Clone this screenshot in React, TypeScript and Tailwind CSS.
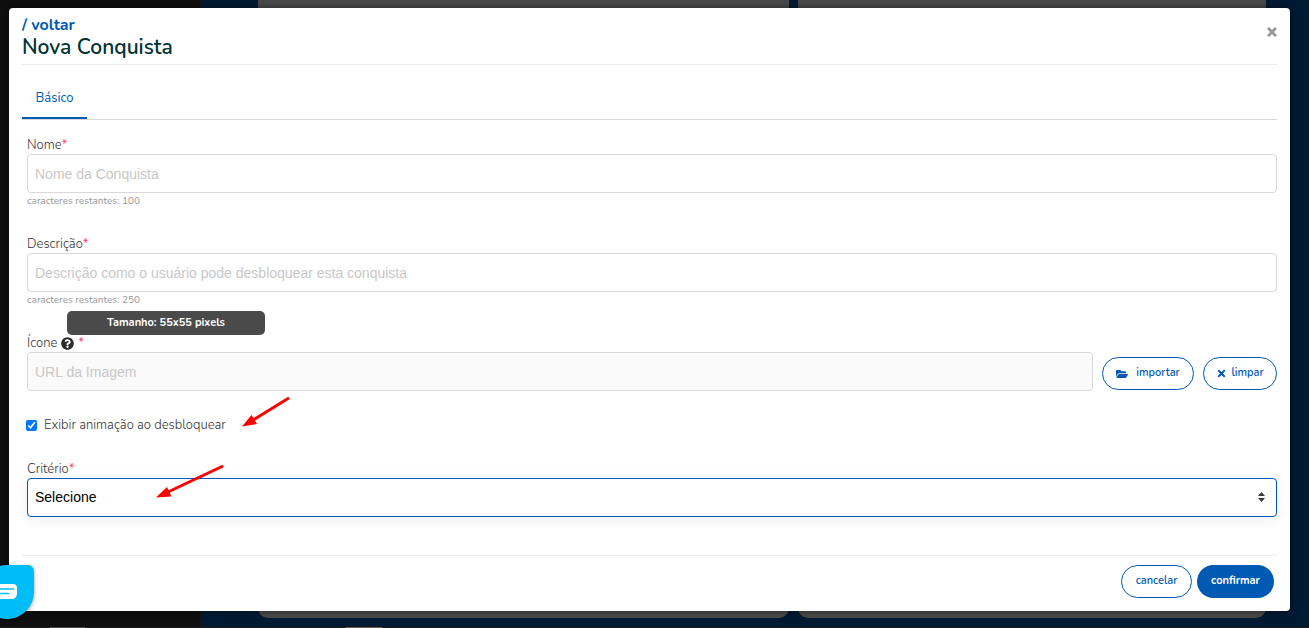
import React, { useState } from 'react';
import { FaFolderOpen, FaQuestionCircle, FaTimes } from 'react-icons/fa';

type TextFieldProps = {
  id: string;
  label: string;
  placeholder: string;
  max: number;
};

const inputClass =
  "block h-[39px] w-full rounded border border-[#d9d9d9] px-[7px] font-['Liberation_Sans',Arial,sans-serif] text-[14px] text-black placeholder:text-[#c8c8c8] outline-none";
const labelClass = "flex h-[18px] items-center text-[13px] leading-[18px] font-light text-[#333]";
const outlineButton =
  "flex h-[33px] items-center justify-center rounded-full border border-[#0059b3] bg-white text-[11px] font-semibold text-[#0059b3]";

function Required() {
  return <span className="text-[#ff1a4b]">*</span>;
}

function TextField({ id, label, placeholder, max }: TextFieldProps) {
  const [value, setValue] = useState('');

  return (
    <div>
      <label htmlFor={id} className={labelClass}>
        {label}
        <Required />
      </label>
      <input
        id={id}
        type="text"
        maxLength={max}
        value={value}
        placeholder={placeholder}
        onChange={(e) => setValue(e.target.value)}
        className={inputClass}
      />
      <p className="h-4 text-[10px] leading-4 text-[#999]">caracteres restantes: {max - value.length}</p>
    </div>
  );
}

// Dimmed page behind the dialog
function Backdrop() {
  return (
    <div className="absolute inset-0 flex flex-col bg-[#001a33]">
      <div className="flex min-h-0 flex-1">
        <div className="w-[201px] border-r border-[#151515] bg-[#0f0f0f]" />
        <div className="mr-[43px] mb-[9px] ml-[57px] flex flex-1 gap-[9px]">
          <div className="flex-[531] rounded-b-[10px] bg-[#4a4a4a]" />
          <div className="flex-[468] rounded-b-[10px] bg-[#4a4a4a]" />
        </div>
      </div>
      <div className="flex h-px bg-[#1c1c1c]">
        <div className="ml-[50px] w-[35px] bg-[#4a4a4a]" />
        <div className="ml-[261px] w-[36px] bg-[#7d5a3f]" />
      </div>
    </div>
  );
}

export default function App() {
  const [animate, setAnimate] = useState(true);

  return (
    <div className="relative min-h-screen overflow-hidden font-['Nunito','Lato',sans-serif]">
      <Backdrop />

      <main className="relative mt-2 mr-[19px] mb-[17px] ml-[9px] rounded bg-white px-[13px] pb-[13px] shadow-[0_0_8px_rgba(0,0,0,0.5)]">
        <header className="flex justify-between border-b border-[#ebebeb] pt-1.5 pb-1.5">
          <div>
            <a href="#voltar" className="block text-[16px] leading-[22px] font-bold text-[#0059b3]">
              / voltar
            </a>
            <h1 className="text-[21px] leading-[22px] font-semibold text-[#003333]">Nova Conquista</h1>
          </div>
          <button type="button" aria-label="Fechar" className="h-9 text-[#999]">
            <svg viewBox="0 0 10 10" className="size-[10px]" stroke="currentColor" strokeWidth="3">
              <path d="M1 1L9 9M9 1L1 9" />
            </svg>
          </button>
        </header>

        <nav className="mt-3 flex border-b border-[#d9d9d9]">
          <button
            type="button"
            className="h-[42px] w-[65px] border-b-2 border-[#0059b3] pt-1 text-[13px] text-[#0059b3]"
          >
            Básico
          </button>
        </nav>

        <form className="pt-4" onSubmit={(e) => e.preventDefault()}>
          <div className="flex flex-col gap-[26px] pl-[5px]">
            <TextField id="nome" label="Nome" placeholder="Nome da Conquista" max={100} />
            <TextField
              id="descricao"
              label="Descrição"
              placeholder="Descrição como o usuário pode desbloquear esta conquista"
              max={250}
            />

            <div className="flex gap-[9px]">
              <div className="flex-1">
                <div className="relative">
                  <label htmlFor="icone" className={labelClass}>
                    Ícone
                    <FaQuestionCircle className="mr-1 ml-1 size-[13px] text-[#2b2b2b]" />
                    <Required />
                  </label>
                  <div
                    role="tooltip"
                    className="absolute bottom-[17px] left-10 h-6 w-[198px] rounded-[5px] bg-[#4a4a4a] text-center text-[11px] leading-[23px] font-bold text-white"
                  >
                    Tamanho: 55x55 pixels
                  </div>
                </div>
                <input
                  id="icone"
                  type="text"
                  readOnly
                  placeholder="URL da Imagem"
                  className={`${inputClass} bg-[#fafafa]`}
                />
              </div>
              <button type="button" className={`${outlineButton} mt-[23px] w-[92px] gap-2`}>
                <FaFolderOpen className="size-3" />
                importar
              </button>
              <button type="button" className={`${outlineButton} mt-[23px] w-[74px] gap-1`}>
                <FaTimes className="size-[11px]" />
                limpar
              </button>
            </div>

            <label className="-ml-px flex h-[17px] items-center gap-[7px] text-[13px] font-light text-[#333]">
              <input
                type="checkbox"
                checked={animate}
                onChange={(e) => setAnimate(e.target.checked)}
                className="size-[11px] accent-[#0075ff]"
              />
              Exibir animação ao desbloquear
            </label>

            <div>
              <label htmlFor="criterio" className={labelClass}>
                Critério
                <Required />
              </label>
              <div className="relative">
                <select
                  id="criterio"
                  className="block h-[39px] w-full appearance-none rounded border border-[#0059b3] bg-white px-[7px] font-['Liberation_Sans',Arial,sans-serif] text-[14px] text-black shadow-[0_2px_14px_rgba(0,0,0,0.08)] outline-none"
                >
                  <option>Selecione</option>
                </select>
                <svg viewBox="0 0 7 10" className="pointer-events-none absolute top-[14px] right-3 h-[10px] w-[7px]" fill="#343a40">
                  <path d="M3.5 0L7 4H0ZM3.5 10L0 6H7Z" />
                </svg>
              </div>
            </div>
          </div>

          <footer className="mt-[38px] flex justify-end gap-[5px] border-t border-[#ebebeb] pt-[9px] pr-[3px]">
            <button type="button" className={`${outlineButton} w-[71px]`}>
              cancelar
            </button>
            <button
              type="submit"
              className="h-[33px] w-[77px] rounded-full bg-[#0059b3] text-[11px] font-bold text-white"
            >
              confirmar
            </button>
          </footer>
        </form>
      </main>

      {/* Chat launcher, partly off the left edge */}
      <button
        type="button"
        aria-label="Chat"
        className="absolute bottom-[9px] -left-5 flex size-[54px] items-center justify-center rounded-[27px] rounded-tr-[6px] bg-[#00bdf7] shadow-[0_2px_4px_rgba(0,0,0,0.35)]"
      >
        <svg viewBox="0 0 22 16" className="h-4 w-[22px]">
          <path d="M4 0H17Q21 0 21 4V9Q21 15 15 15H4Q0 15 0 11V4Q0 0 4 0Z" fill="#fff" />
          <path d="M3 5H18M3 9.5H13" stroke="#00bdf7" strokeWidth="1.5" />
        </svg>
      </button>

      {/* Annotation arrows */}
      <svg
        className="pointer-events-none absolute top-[396px] left-[155px] h-[104px] w-[136px]"
        viewBox="155 396 136 104"
        fill="#f00"
        stroke="#f00"
      >
        <path d="M288 398.500L253 420M222 466.500L169 491.500" strokeWidth="3" strokeLinecap="round" />
        <path d="M242 426.500L251.500 415L257 424ZM156 497.500L167 487L171.500 496.500Z" stroke="none" />
      </svg>
    </div>
  );
}
